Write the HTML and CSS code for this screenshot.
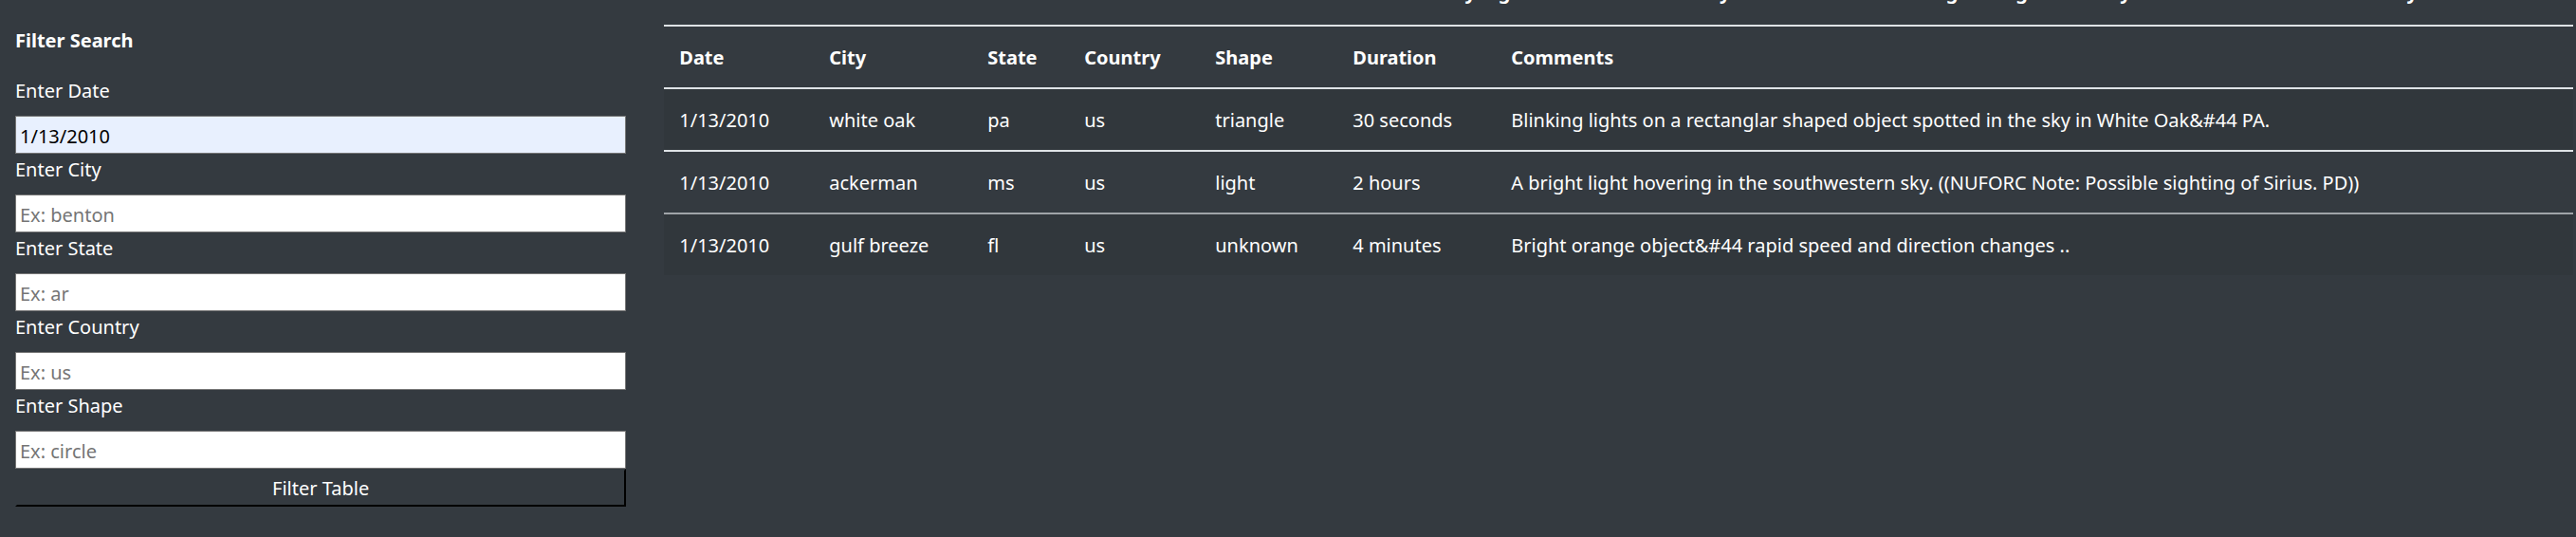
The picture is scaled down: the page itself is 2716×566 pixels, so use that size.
FILE: index.html
```html
<!DOCTYPE html>
<html lang="en">
<head>
<meta charset="utf-8">
<title>UFO Sightings</title>
<link rel="stylesheet" href="styles.css">
</head>
<body>
<main class="layout">
  <form class="filters">
    <p class="filters-title">Filter Search</p>
    <label for="date">Enter Date</label>
    <input class="filled" id="date" type="text" value="1/13/2010">
    <label for="city">Enter City</label>
    <input id="city" type="text" placeholder="Ex: benton">
    <label for="state">Enter State</label>
    <input id="state" type="text" placeholder="Ex: ar">
    <label for="country">Enter Country</label>
    <input id="country" type="text" placeholder="Ex: us">
    <label for="shape">Enter Shape</label>
    <input id="shape" type="text" placeholder="Ex: circle">
    <button type="button">Filter Table</button>
  </form>
  <section class="results">
    <div class="intro"><p>If any big orbs come into the sky it takes skills in looking through the story and data to find truth directly</p></div>
    <table class="sightings">
      <colgroup>
        <col class="c-date"><col class="c-city"><col class="c-state"><col class="c-country"><col class="c-shape"><col class="c-duration"><col>
      </colgroup>
      <thead>
        <tr><th>Date</th><th>City</th><th>State</th><th>Country</th><th>Shape</th><th>Duration</th><th>Comments</th></tr>
      </thead>
      <tbody>
        <tr><td>1/13/2010</td><td>white oak</td><td>pa</td><td>us</td><td>triangle</td><td>30 seconds</td><td>Blinking lights on a rectanglar shaped object spotted in the sky in White Oak&amp;#44 PA.</td></tr>
        <tr><td>1/13/2010</td><td>ackerman</td><td>ms</td><td>us</td><td>light</td><td>2 hours</td><td>A bright light hovering in the southwestern sky. ((NUFORC Note: Possible sighting of Sirius. PD))</td></tr>
        <tr><td>1/13/2010</td><td>gulf breeze</td><td>fl</td><td>us</td><td>unknown</td><td>4 minutes</td><td>Bright orange object&amp;#44 rapid speed and direction changes ..</td></tr>
      </tbody>
    </table>
  </section>
</main>
</body>
</html>
```

FILE: styles.css
```css
* { box-sizing: border-box; }
body {
  margin: 0;
  background: #343a40;
  color: #fff;
  font: 20px/32px "Noto Sans", "Open Sans", sans-serif;
}
p { margin: 0; }
.layout {
  display: grid;
  grid-template-columns: calc(25% - 30px) 1fr;
  gap: 40px;
  padding: 0 3px 0 16px;
}
.filters {
  display: flex;
  flex-direction: column;
  padding-top: 27px;
}
.filters-title {
  font-weight: 700;
  margin-bottom: 20px;
}
label {
  line-height: 34px;
  margin-bottom: 9px;
}
input {
  width: 100%;
  height: 40px;
  padding: 2px 4px 0;
  border: 1px solid #767676;
  border-radius: 0;
  background: #fff;
  color: #000;
  font: inherit;
}
input.filled { background: #e8f0fe; }
input::placeholder { color: #757575; opacity: 1; }
button {
  height: 40px;
  padding: 2px 0 0;
  border: 2px solid #000;
  border-top-color: #343a40;
  border-left-color: #343a40;
  background: #343a40;
  color: #fff;
  font: inherit;
}
/* Scrolled-past end of the introduction */
.intro {
  display: flex;
  flex-direction: column;
  justify-content: flex-end;
  align-items: flex-end;
  height: 26px;
  padding: 0 164px 18px 0;
  overflow: hidden;
  font-weight: 700;
  white-space: nowrap;
}
.sightings {
  width: 100%;
  table-layout: fixed;
  border-collapse: separate;
  border-spacing: 0;
}
th, td {
  padding: 17px 16px 15px;
  border-top: 2px solid #dee2e6;
  text-align: left;
}
tbody tr:nth-child(odd) { background: rgba(0, 0, 0, .05); }
tbody tr:last-child td { border-top-color: #9fa4a8; }
.c-date { width: 158px; }
.c-city { width: 167px; }
.c-state { width: 102px; }
.c-country { width: 138px; }
.c-shape { width: 145px; }
.c-duration { width: 167px; }
```
